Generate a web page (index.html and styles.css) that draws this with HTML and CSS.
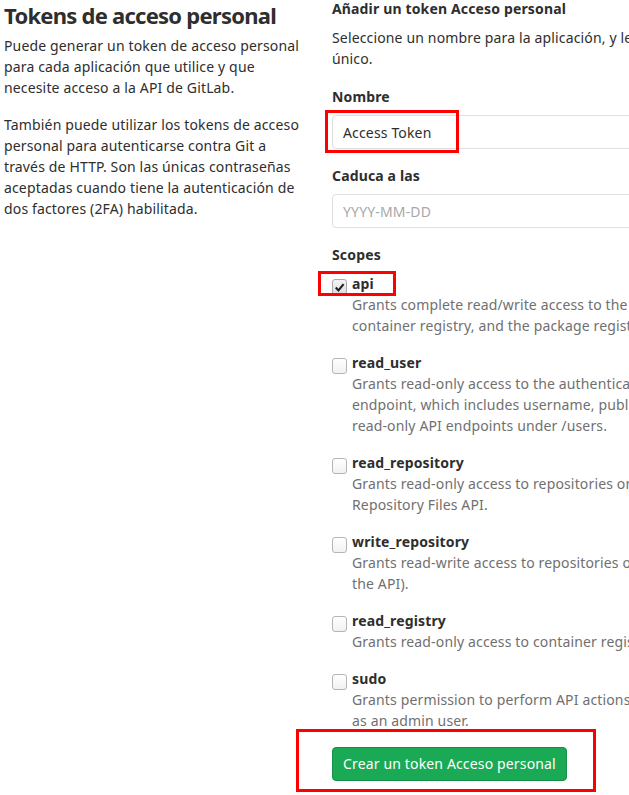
FILE: index.html
```html
<!DOCTYPE html>
<html lang="es">
<head>
<meta charset="utf-8">
<title>Tokens de acceso personal</title>
<link rel="stylesheet" href="styles.css">
</head>
<body>
<div class="page">
  <aside class="intro">
    <h3 class="intro-title">Tokens de acceso personal</h3>
    <p class="intro-text">Puede generar un token de acceso personal para cada aplicación que utilice y que necesite acceso a la API de GitLab.</p>
    <p class="intro-text">También puede utilizar los tokens de acceso personal para autenticarse contra Git a través de HTTP. Son las únicas contraseñas aceptadas cuando tiene la autenticación de dos factores (2FA) habilitada.</p>
  </aside>

  <form class="token-form">
    <h5 class="form-title">Añadir un token Acceso personal</h5>
    <p class="form-help">Seleccione un nombre para la aplicación, y le otorgaremos un token de acceso personal único.</p>

    <div class="form-group">
      <label class="label" for="name">Nombre</label>
      <input class="input" id="name" type="text" value="Access Token">
    </div>

    <div class="form-group">
      <label class="label" for="exp">Caduca a las</label>
      <input class="input" id="exp" type="text" placeholder="YYYY-MM-DD">
    </div>

    <div class="scopes">
      <div class="label">Scopes</div>
      <div class="scope">
        <span class="cb checked"><svg viewBox="0 0 15 15" width="15" height="15"><path d="M3.2 7.6 L6.3 10.8 L12.2 3.6" fill="none" stroke="#1f1f1f" stroke-width="2.4" stroke-linecap="butt" stroke-linejoin="miter"/></svg></span>
        <div class="scope-body">
          <div class="scope-name">api</div>
          <div class="scope-desc">Grants complete read/write access to the API, including all groups and projects, the container registry, and the package registry.</div>
        </div>
      </div>
      <div class="scope">
        <span class="cb"></span>
        <div class="scope-body">
          <div class="scope-name">read_user</div>
          <div class="scope-desc">Grants read-only access to the authenticated user's profile through the /user API endpoint, which includes username, public email, and full name. Also grants access to read-only API endpoints under /users.</div>
        </div>
      </div>
      <div class="scope">
        <span class="cb"></span>
        <div class="scope-body">
          <div class="scope-name">read_repository</div>
          <div class="scope-desc">Grants read-only access to repositories on private projects using Git-over-HTTP or the Repository Files API.</div>
        </div>
      </div>
      <div class="scope">
        <span class="cb"></span>
        <div class="scope-body">
          <div class="scope-name">write_repository</div>
          <div class="scope-desc">Grants read-write access to repositories on private projects using Git-over-HTTP (not using the API).</div>
        </div>
      </div>
      <div class="scope">
        <span class="cb"></span>
        <div class="scope-body">
          <div class="scope-name">read_registry</div>
          <div class="scope-desc">Grants read-only access to container registry images on private projects.</div>
        </div>
      </div>
      <div class="scope">
        <span class="cb"></span>
        <div class="scope-body">
          <div class="scope-name">sudo</div>
          <div class="scope-desc">Grants permission to perform API actions as any user in the system, when authenticated as an admin user.</div>
        </div>
      </div>
    </div>

    <div class="actions">
      <button class="btn-create" type="button">Crear un token Acceso personal</button>
    </div>
  </form>
</div>

<div class="mark mark-name"></div>
<div class="mark mark-api"></div>
<div class="mark mark-btn"></div>
</body>
</html>
```
FILE: styles.css
```css
html, body {
  margin: 0;
  padding: 0;
  overflow: hidden;
  background: #fff;
}
body {
  font-family: "Noto Sans", "Open Sans", sans-serif;
  font-size: 14px;
  line-height: 21px;
  letter-spacing: 0.15px;
  color: #2e2e2e;
  position: relative;
  width: 629px;
  height: 795px;
}
.page {
  display: flex;
  gap: 28px;
  padding-left: 4px;
  width: 1000px;
}
.intro {
  width: 300px;
  flex: none;
}
.intro-title {
  margin: 0 0 5px;
  font-size: 22px;
  line-height: 30px;
  font-weight: 700;
  letter-spacing: -0.75px;
  color: #2e2e2e;
}
.intro-text {
  margin: 0 0 16px;
}
.token-form {
  width: 614px;
  flex: none;
}
.form-title {
  margin: 1px 0 10px;
  font-size: 14px;
  line-height: 16px;
  font-weight: 700;
}
.form-help {
  margin: 0 0 17px;
}
.form-group {
  margin-bottom: 16px;
}
.label {
  display: block;
  font-weight: 700;
  margin-bottom: 8px;
}
.input {
  display: block;
  box-sizing: border-box;
  width: 100%;
  height: 34px;
  padding: 6px 10px;
  border: 1px solid #dfdfdf;
  border-radius: 4px;
  font-family: inherit;
  font-size: 14px;
  letter-spacing: 0.15px;
  color: #2e2e2e;
  background: #fff;
  outline: none;
}
.input::placeholder {
  color: #a8a8a8;
}
.scopes .label {
  margin-bottom: 8px;
}
.scope {
  display: flex;
  gap: 5px;
  margin-bottom: 16px;
}
.cb {
  flex: none;
  box-sizing: border-box;
  width: 15px;
  height: 16px;
  margin-top: 6px;
  border: 1px solid #b5b5b5;
  border-radius: 3px;
  background: linear-gradient(#ffffff, #f1f1f1);
  display: flex;
  align-items: center;
  justify-content: center;
}
.cb svg {
  display: block;
}
.cb.checked {
  background: linear-gradient(#f2f2f2, #dedede);
  border-color: #a9a9a9;
}
.scope-body {
  flex: none;
  width: 607.5px;
}
.scope-name {
  font-weight: 700;
}
.scope-desc {
  color: #707070;
}
.btn-create {
  height: 34px;
  padding: 0 10px;
  border: 1px solid #168f48;
  border-radius: 4px;
  background: #1aaa55;
  color: #fff;
  font-family: inherit;
  font-size: 14px;
  line-height: 20px;
  letter-spacing: 0.15px;
  cursor: pointer;
}
.mark {
  position: absolute;
  box-sizing: border-box;
  border: 3px solid #ff0000;
}
.mark-name {
  left: 325px;
  top: 110px;
  width: 134px;
  height: 43px;
}
.mark-api {
  left: 318px;
  top: 271px;
  width: 78px;
  height: 25px;
}
.mark-btn {
  left: 296px;
  top: 729px;
  width: 300px;
  height: 63px;
}
```
